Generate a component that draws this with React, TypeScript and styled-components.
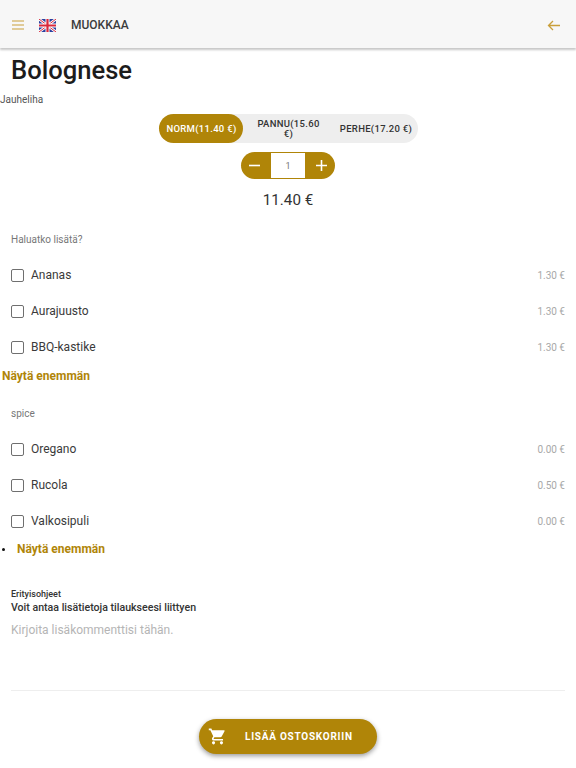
import React from 'react';
import styled, { createGlobalStyle } from 'styled-components';
import { MdShoppingCart } from 'react-icons/md';

const GOLD = '#b08508';

const GlobalStyle = createGlobalStyle`
  html, body {
    margin: 0;
    padding: 0;
    background: #fff;
    font-family: Roboto, "Liberation Sans", sans-serif;
    color: #212121;
  }
`;

const Page = styled.div`
  width: 576px;
  height: 768px;
  overflow: hidden;
  display: flex;
  flex-direction: column;
`;

const Header = styled.header`
  height: 46px;
  flex: none;
  background: #f7f7f7;
  box-shadow: 0 2px 2px rgba(0, 0, 0, 0.22);
  display: flex;
  align-items: center;
  padding: 2px 16px 0 12px;
`;

const HeaderTitle = styled.span`
  font-size: 12px;
  font-weight: 500;
  margin-left: 15px;
  color: #3c3c3c;
`;

const FlagBox = styled.span`
  display: flex;
  margin-left: 15px;
`;

const BackButton = styled.span`
  display: flex;
  margin-left: auto;
`;

const Title = styled.h1`
  margin: 7px 0 0 11px;
  font-size: 25.6px;
  line-height: 30px;
  font-weight: 500;
  color: #1c1c1c;
`;

const VariantLabel = styled.div`
  margin-top: 9px;
  font-size: 10px;
  line-height: 12px;
  color: #555;
`;

const Center = styled.div`
  display: flex;
  justify-content: center;
`;

const Toggle = styled.div`
  margin-top: 8px;
  width: 259px;
  height: 29px;
  border-radius: 15px;
  background: #eee;
  display: grid;
  grid-template-columns: 84px 90px 85px;
`;

const ToggleItem = styled.div<{ $active?: boolean }>`
  display: flex;
  align-items: center;
  justify-content: center;
  text-align: center;
  border-radius: 15px;
  font-size: 9.5px;
  line-height: 10px;
  font-weight: 500;
  letter-spacing: 0.3px;
  padding: 0 2px 0 4px;
  background: ${(p) => (p.$active ? GOLD : 'transparent')};
  color: ${(p) => (p.$active ? '#fff' : '#333')};
`;

const Stepper = styled.div`
  margin-top: 9px;
  width: 94px;
  height: 27px;
  border-radius: 14px;
  background: ${GOLD};
  display: flex;
  align-items: center;
  justify-content: space-between;
  padding: 0 7px;
  box-sizing: border-box;
`;

const StepValue = styled.div`
  width: 34px;
  height: 25px;
  background: #fff;
  display: flex;
  align-items: center;
  justify-content: center;
  font-size: 9px;
  color: #777;
`;

const Total = styled.div`
  margin-top: 12px;
  text-align: center;
  font-size: 15.2px;
  line-height: 19px;
  color: #333;
`;

const GroupTitle = styled.div<{ $top: number }>`
  margin: ${(p) => p.$top}px 0 0 11px;
  font-size: 10px;
  line-height: 12px;
  color: #777;
`;

const Options = styled.div<{ $top: number }>`
  margin-top: ${(p) => p.$top}px;
  padding: 0 11px;
`;

const Option = styled.div`
  height: 36px;
  display: flex;
  align-items: center;
`;

const Box = styled.span`
  width: 11px;
  height: 11px;
  border: 1.5px solid #6f6f6f;
  border-radius: 2px;
  flex: none;
`;

const OptionName = styled.span`
  margin-left: 7px;
  font-size: 12px;
  color: #3a3a3a;
`;

const OptionPrice = styled.span`
  margin-left: auto;
  font-size: 10px;
  color: #a8a8a8;
`;

const MoreLink = styled.div`
  margin: 4px 0 0 2px;
  font-size: 12px;
  line-height: 14px;
  font-weight: 700;
  color: ${GOLD};
`;

const MoreList = styled.ul`
  margin: 3px 0 0;
  padding: 0 0 0 2px;
  list-style: none;
  font-size: 12px;
  line-height: 14px;
  font-weight: 700;
  color: ${GOLD};

  li {
    display: flex;
    align-items: center;
    gap: 12px;
  }

  li::before {
    content: '';
    width: 3px;
    height: 3px;
    border-radius: 50%;
    background: #111;
  }
`;

const Instructions = styled.div`
  margin: 33px 11px 0;
`;

const InstructionsTitle = styled.div`
  font-size: 9px;
  line-height: 11px;
  font-weight: 500;
  color: #333;
`;

const InstructionsHint = styled.div`
  margin-top: 1px;
  font-size: 10.6px;
  line-height: 13px;
  font-weight: 500;
  color: #333;
`;

const Comment = styled.textarea`
  display: block;
  width: 100%;
  height: 67px;
  margin: 9px 0 0;
  padding: 0;
  border: 0;
  outline: 0;
  resize: none;
  font-family: inherit;
  font-size: 12px;
  line-height: 14px;

  &::placeholder {
    color: #b5b5b5;
    opacity: 1;
  }
`;

const Divider = styled.hr`
  margin: 0 11px;
  border: 0;
  border-top: 1px solid #eee;
`;

const AddButton = styled.button`
  margin-top: 28px;
  width: 178px;
  height: 35px;
  border: 0;
  border-radius: 18px;
  background: ${GOLD};
  color: #fff;
  box-shadow: 0 2px 5px rgba(0, 0, 0, 0.4);
  display: flex;
  align-items: center;
  padding: 0 0 0 9px;
  font-family: inherit;
  font-size: 10px;
  font-weight: 700;
  letter-spacing: 0.75px;
`;

const ButtonLabel = styled.span`
  margin-left: 18px;
`;

const MenuIcon = () => (
  <svg width="12" height="10" viewBox="0 0 12 10" fill="none" stroke="#c99f3a" strokeWidth="1.2">
    <path d="M0 1h12M0 5h12M0 9h12" />
  </svg>
);

const FlagIcon = () => (
  <svg width="17" height="13" viewBox="0 0 17 13">
    <rect width="17" height="13" fill="#2b3f9e" />
    <path d="M0 0l17 13M17 0L0 13" stroke="#fff" strokeWidth="2.6" />
    <path d="M0 0l17 13M17 0L0 13" stroke="#d8283c" strokeWidth="1" />
    <path d="M8.5 0v13M0 6.5h17" stroke="#fff" strokeWidth="4" />
    <path d="M8.5 0v13M0 6.5h17" stroke="#d8283c" strokeWidth="2.2" />
  </svg>
);

const BackIcon = () => (
  <svg width="13" height="11" viewBox="0 0 13 11" fill="none" stroke="#c99f3a" strokeWidth="1.3">
    <path d="M13 5.5H1.5M6 1L1.5 5.5 6 10" />
  </svg>
);

const MinusIcon = () => (
  <svg width="13" height="13" viewBox="0 0 13 13" stroke="#fff" strokeWidth="1.6">
    <path d="M1 6.5h11" />
  </svg>
);

const PlusIcon = () => (
  <svg width="13" height="13" viewBox="0 0 13 13" stroke="#fff" strokeWidth="1.6">
    <path d="M1 6.5h11M6.5 1v11" />
  </svg>
);

const toppings = [
  { name: 'Ananas', price: '1.30 €' },
  { name: 'Aurajuusto', price: '1.30 €' },
  { name: 'BBQ-kastike', price: '1.30 €' },
];

const spices = [
  { name: 'Oregano', price: '0.00 €' },
  { name: 'Rucola', price: '0.50 €' },
  { name: 'Valkosipuli', price: '0.00 €' },
];

function OptionList({ items, top }: { items: { name: string; price: string }[]; top: number }) {
  return (
    <Options $top={top}>
      {items.map((item) => (
        <Option key={item.name}>
          <Box />
          <OptionName>{item.name}</OptionName>
          <OptionPrice>{item.price}</OptionPrice>
        </Option>
      ))}
    </Options>
  );
}

export default function App() {
  return (
    <Page>
      <GlobalStyle />
      <Header>
        <MenuIcon />
        <FlagBox>
          <FlagIcon />
        </FlagBox>
        <HeaderTitle>MUOKKAA</HeaderTitle>
        <BackButton>
          <BackIcon />
        </BackButton>
      </Header>
      <Title>Bolognese</Title>
      <VariantLabel>Jauheliha</VariantLabel>
      <Center>
        <Toggle>
          <ToggleItem $active>NORM(11.40 €)</ToggleItem>
          <ToggleItem>
            PANNU(15.60
            <br />
            €)
          </ToggleItem>
          <ToggleItem>PERHE(17.20 €)</ToggleItem>
        </Toggle>
      </Center>
      <Center>
        <Stepper>
          <MinusIcon />
          <StepValue>1</StepValue>
          <PlusIcon />
        </Stepper>
      </Center>
      <Total>11.40 €</Total>
      <GroupTitle $top={24}>Haluatko lisätä?</GroupTitle>
      <OptionList items={toppings} top={11} />
      <MoreLink>Näytä enemmän</MoreLink>
      <GroupTitle $top={25}>spice</GroupTitle>
      <OptionList items={spices} top={11} />
      <MoreList>
        <li>Näytä enemmän</li>
      </MoreList>
      <Instructions>
        <InstructionsTitle>Erityisohjeet</InstructionsTitle>
        <InstructionsHint>Voit antaa lisätietoja tilaukseesi liittyen</InstructionsHint>
        <Comment placeholder="Kirjoita lisäkommenttisi tähän." />
      </Instructions>
      <Divider />
      <Center>
        <AddButton>
          <MdShoppingCart size={19} />
          <ButtonLabel>LISÄÄ OSTOSKORIIN</ButtonLabel>
        </AddButton>
      </Center>
    </Page>
  );
}
